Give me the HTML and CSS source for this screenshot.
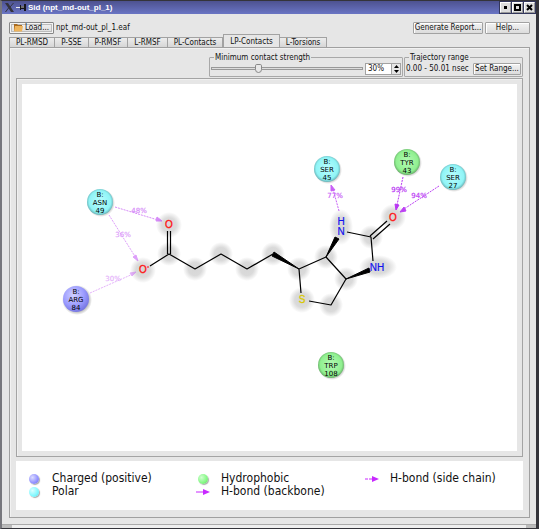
FILE: index.html
```html
<!DOCTYPE html>
<html lang="en">
<head>
<meta charset="utf-8">
<title>Sid (npt_md-out_pl_1)</title>
<link rel="stylesheet" href="styles.css">
</head>
<body>
<div class="window">
  <header class="titlebar">
    <svg class="app-icon" width="9" height="9" viewBox="0 0 9 9" aria-hidden="true"><path d="M0 0h3l6 9H6z" fill="#33333c"/><path d="M8.500 0L5 4M3.500 5L.5 9" stroke="#33333c" fill="none"/></svg>
    <svg class="pin-icon" width="10" height="7" viewBox="0 0 10 7" aria-hidden="true"><path d="M0 3.500h4" stroke="#eee"/><path d="M4 1h1v1h3V0h2v7H8V5H5v1H4z" fill="#16161c"/><path d="M5 3h3" stroke="#ccc"/></svg>
    <h1 class="title">Sid (npt_md-out_pl_1)</h1>
    <div class="window-buttons">
      <button class="window-button" aria-label="Minimize"><svg width="7" height="7"><path d="M2 2h3v3H2z"/></svg></button>
      <button class="window-button" aria-label="Maximize"><svg width="7" height="7"><path d="M1 1h5v5H1z" class="box"/></svg></button>
      <button class="window-button" aria-label="Close"><svg width="7" height="7"><path d="M1 1l5 5M6 1l-5 5" class="cross"/></svg></button>
    </div>
  </header>

  <main class="content">
    <div class="toolbar">
      <button class="button load"><svg width="9" height="9" viewBox="0 0 9 9" aria-hidden="true"><path d="M0 1h3l1 1h4v6H0z" fill="#a86b22"/><path d="M1 3h8L8 8.500H0z" fill="#eeb45c"/></svg>Load...</button>
      <span class="filename">npt_md-out_pl_1.eaf</span>
      <button class="button report">Generate Report...</button>
      <button class="button help">Help...</button>
    </div>

    <div class="tabs" role="tablist">
      <button class="tab" role="tab">PL-RMSD</button>
      <button class="tab" role="tab">P-SSE</button>
      <button class="tab" role="tab">P-RMSF</button>
      <button class="tab" role="tab">L-RMSF</button>
      <button class="tab" role="tab">PL-Contacts</button>
      <button class="tab selected" role="tab" aria-selected="true">LP-Contacts</button>
      <button class="tab" role="tab">L-Torsions</button>
    </div>

    <section class="page" role="tabpanel">
      <div class="controls">
        <fieldset class="group strength">
          <legend>Minimum contact strength</legend>
          <div class="group-row">
            <input class="slider" type="range" min="0" max="100" value="30" aria-label="Minimum contact strength">
            <div class="spinner">
              <input class="spin-value" type="text" value="30%" aria-label="Strength percentage">
              <div class="spin-buttons">
                <button aria-label="Increase"><svg width="5" height="3"><path d="M0 3L2.500 0 5 3z"/></svg></button>
                <button aria-label="Decrease"><svg width="5" height="3"><path d="M0 0h5L2.500 3z"/></svg></button>
              </div>
            </div>
          </div>
        </fieldset>
        <fieldset class="group range">
          <legend>Trajectory range</legend>
          <div class="group-row">
            <span>0.00 - 50.01 nsec</span>
            <button class="button">Set Range...</button>
          </div>
        </fieldset>
      </div>

      <div class="frame">
        <svg class="diagram" viewBox="22 84 495 367" role="img" aria-label="Ligand-protein contacts">
          <defs>
            <radialGradient id="halo"><stop offset="0" stop-color="#d6d6d6"/><stop offset=".55" stop-color="#d6d6d6" stop-opacity=".9"/><stop offset="1" stop-color="#d6d6d6" stop-opacity="0"/></radialGradient>
            <radialGradient id="shadow"><stop offset=".8" stop-color="#888" stop-opacity=".5"/><stop offset="1" stop-color="#888" stop-opacity="0"/></radialGradient>
            <radialGradient id="polar" cx=".5" cy=".48" r=".52"><stop offset="0" stop-color="#b8ffff"/><stop offset=".8" stop-color="#90f4f6"/><stop offset="1" stop-color="#68b4b8"/></radialGradient>
            <radialGradient id="hydrophobic" cx=".5" cy=".48" r=".52"><stop offset="0" stop-color="#b4fab4"/><stop offset=".8" stop-color="#90f090"/><stop offset="1" stop-color="#68ae68"/></radialGradient>
            <radialGradient id="positive" cx=".4" cy=".35" r=".68"><stop offset="0" stop-color="#d0d0ff"/><stop offset=".6" stop-color="#9c9cff"/><stop offset="1" stop-color="#7474e0"/></radialGradient>
          </defs>

          <g class="halos">
            <circle cx="169" cy="225" r="13"/><circle cx="143" cy="270" r="13"/><circle cx="169" cy="254" r="12"/><circle cx="195" cy="269" r="12"/>
            <circle cx="221" cy="254" r="12"/><circle cx="247" cy="269" r="12"/><circle cx="273" cy="254" r="12"/><circle cx="299" cy="269" r="12"/>
            <circle cx="326" cy="257" r="12"/><circle cx="346" cy="279" r="12"/><circle cx="331" cy="305" r="12"/><circle cx="302" cy="300" r="13"/>
            <ellipse cx="341" cy="227" rx="12" ry="18"/><circle cx="371" cy="237" r="12"/><circle cx="393" cy="217" r="13"/><ellipse cx="378" cy="267" rx="19" ry="12"/>
          </g>

          <g class="bonds">
            <path d="M167.500 231v23M170.500 231v23M150 266l19-12 26 15 26-15 26 15 26-15M299 269l27-12 20 22-15 26-22-4M299 269l2 24M347 232l24 5 2 24M370 236l17-15M373 239l17-15"/>
            <path class="wedge" d="M299 269l-25-17-2 4zM326 257l9-20 4 2zM346 279l23-11 1 4z"/>
          </g>

          <g class="atoms">
            <text class="oxygen" x="169" y="228">O</text>
            <text class="oxygen" x="143" y="273">O</text><path class="charge" d="M147 267h2"/>
            <text class="oxygen" x="393" y="221">O</text>
            <text class="nitrogen" x="341" y="225">H</text>
            <text class="nitrogen" x="341" y="235">N</text>
            <text class="nitrogen" x="377" y="271">NH</text>
            <text class="sulfur" x="302" y="303">S</text>
          </g>

          <g class="contact" opacity=".55"><path class="line" d="M115 207l43 13"/><path class="head" d="M162 221l-6 0 1-4z"/><text x="139" y="213">48%</text></g>
          <g class="contact" opacity=".45"><path class="line" d="M109 215l27 43"/><path class="head" d="M138 261l-5-4 3-2z"/><text x="123" y="237">36%</text></g>
          <g class="contact" opacity=".36"><path class="line" d="M90 293l43-19"/><path class="head" d="M136 272l-4 4-2-3z"/><text x="113" y="281">30%</text></g>
          <g class="contact" opacity=".75"><path class="line" d="M339 211l-6-22"/><path class="head" d="M331 185l4 5-4 1z"/><text x="335" y="198">77%</text></g>
          <g class="contact" opacity=".95"><path class="line" d="M403 177l-6 28"/><path class="head" d="M396 210l-1-6 4 1z"/><text x="399" y="192">99%</text></g>
          <g class="contact" opacity=".9"><path class="line" d="M439 186l-35 23"/><path class="head" d="M400 212l4-5 2 4z"/><text x="419" y="198">94%</text></g>

          <g class="residue" transform="translate(100 202)"><circle class="drop" r="14" cx="1" cy="1"/><circle class="polar" r="13"/><text y="-5">B:</text><text y="3">ASN</text><text y="11">49</text></g>
          <g class="residue" transform="translate(76 299)"><circle class="drop" r="15" cx="1" cy="1"/><circle class="positive" r="13"/><text y="-5">B:</text><text y="3">ARG</text><text y="11">84</text></g>
          <g class="residue" transform="translate(327 169)"><circle class="drop" r="14" cx="1" cy="1"/><circle class="polar" r="13"/><text y="-5">B:</text><text y="3">SER</text><text y="11">45</text></g>
          <g class="residue" transform="translate(407 162)"><circle class="drop" r="14" cx="1" cy="1"/><circle class="hydrophobic" r="13"/><text y="-5">B:</text><text y="3">TYR</text><text y="11">43</text></g>
          <g class="residue" transform="translate(453 177)"><circle class="drop" r="14" cx="1" cy="1"/><circle class="polar" r="13"/><text y="-5">B:</text><text y="3">SER</text><text y="11">27</text></g>
          <g class="residue" transform="translate(331 365)"><circle class="drop" r="14" cx="1" cy="1"/><circle class="hydrophobic" r="13"/><text y="-5">B:</text><text y="3">TRP</text><text y="11">108</text></g>
        </svg>
      </div>

      <ul class="key">
        <li><span class="symbol"><i class="ball ball-positive"></i></span>Charged (positive)</li>
        <li><span class="symbol"><i class="ball ball-hydrophobic"></i></span>Hydrophobic</li>
        <li><span class="symbol"><svg class="arrow" width="14" height="6"><path d="M0 3h8" stroke-dasharray="3 1"/><path d="M7 0l7 3-7 3z"/></svg></span>H-bond (side chain)</li>
        <li><span class="symbol"><i class="ball ball-polar"></i></span>Polar</li>
        <li><span class="symbol"><svg class="arrow" width="14" height="6"><path d="M0 3h8"/><path d="M7 0l7 3-7 3z"/></svg></span>H-bond (backbone)</li>
      </ul>
    </section>
  </main>
  <footer class="resize-bar"></footer>
</div>
</body>
</html>
```

FILE: styles.css
```css
* { box-sizing: border-box; }

body {
  margin: 0;
  min-height: 100vh;
  display: flex;
  background: #e6e6e6;
  color: #111;
  font: 8px/9px "DejaVu Sans Condensed", "DejaVu Sans", sans-serif;
}

button, input { font: inherit; color: inherit; margin: 0; }
button { padding: 0; white-space: nowrap; }

.window {
  flex: 1;
  display: flex;
  flex-direction: column;
  border: solid #34343a;
  border-width: 1px 3px 1px 2px;
  border-left-color: #77777d;
}

.titlebar {
  display: flex;
  align-items: center;
  height: 13px;
  padding-left: 3px;
  background: linear-gradient(#4d5290, #6a75c4);
}
.pin-icon { margin-left: 2px; }
.title {
  flex: 1;
  margin: 0 0 0 2px;
  color: #fff;
  font: bold 8px/15px "Liberation Sans", sans-serif;
}
.window-buttons {
  display: flex;
  align-self: stretch;
  align-items: center;
  gap: 1px;
  padding: 0 1px;
  background: #33375c;
}
.window-button {
  display: flex;
  align-items: center;
  justify-content: center;
  width: 11px;
  height: 11px;
  border: 1px solid #aaa;
  border-color: #fff #999 #999 #fff;
  background: #ddd;
}
.window-button .box { fill: none; stroke: #000; stroke-width: 2; }
.window-button .cross { fill: none; stroke: #000; stroke-width: 2; }

.content {
  flex: 1;
  display: flex;
  flex-direction: column;
  padding: 7px 6px 6px 7px;
}

.toolbar { display: flex; align-items: center; height: 13px; gap: 2px; }
.filename { flex: 1; }

.button {
  display: flex;
  align-items: center;
  justify-content: center;
  height: 12px;
  border: 1px solid #a2a2a2;
  border-radius: 1px;
  background: linear-gradient(#f2f2f2, #dcdcdc);
  box-shadow: inset 1px 1px #fff;
}
.load {
  width: 45px;
  gap: 2px;
  border-color: #888;
  box-shadow: inset 0 0 0 1px #f4f4f4, inset 0 0 0 2px #bbb;
}
.report { width: 70px; }
.help { width: 45px; }

.tabs { display: flex; align-items: flex-end; height: 14px; margin-bottom: -1px; }
.tab {
  height: 11px;
  padding: 0 6px;
  border: 1px solid #a2a2a2;
  border-left-width: 0;
  background: linear-gradient(#ededed, #d6d6d6);
}
.tab:first-child { border-left-width: 1px; }
.tab.selected {
  height: 14px;
  padding-bottom: 1px;
  border-bottom: 0;
  border-left-width: 1px;
  background: #e6e6e6;
}

.page {
  flex: 1;
  display: flex;
  flex-direction: column;
  padding: 5px 6px 6px;
  border: 1px solid #a0a0a0;
  box-shadow: inset 1px 1px #f2f2f2;
}

.controls { display: flex; justify-content: flex-end; gap: 1px; height: 24px; margin-bottom: 1px; }
.group {
  min-width: 0;
  height: 24px;
  margin: 0;
  padding: 0 1px;
  border: 1px solid #a8a8a8;
  border-radius: 1px;
}
.group legend { margin-left: 3px; padding: 0 1px; height: 9px; }
.group-row { display: flex; align-items: center; gap: 2px; height: 13px; white-space: nowrap; }
.strength { width: 194px; }
.range { width: 119px; }
.range .group-row { justify-content: space-between; }
.range .button { width: 48px; }

.slider {
  flex: 1;
  min-width: 0;
  height: 10px;
  appearance: none;
  background: none;
}
.slider::-webkit-slider-runnable-track {
  height: 3px;
  border: 1px solid #999;
  background: #ddd;
}
.slider::-webkit-slider-thumb {
  appearance: none;
  width: 7px;
  height: 9px;
  margin-top: -4px;
  border: 1px solid #888;
  border-radius: 2px 2px 4px 4px;
  background: #e8e8e8;
}
.spinner { display: flex; width: 36px; height: 12px; border: 1px solid #a2a2a2; }
.spin-value { width: 25px; padding: 0 2px; border: 0; background: #fff; }
.spin-buttons { flex: 1; display: grid; }
.spin-buttons button {
  display: flex;
  align-items: center;
  justify-content: center;
  border: 0;
  border-left: 1px solid #a2a2a2;
  background: #e6e6e6;
}

.frame {
  padding: 5px;
  border: 1px solid #a4a4a4;
  box-shadow: inset 1px 1px #f0f0f0;
}
.diagram { display: block; width: 100%; background: #fff; text-anchor: middle; }

.halos { fill: url(#halo); }
.bonds { fill: none; stroke: #000; stroke-width: 1.2; stroke-linejoin: round; }
.bonds .wedge { fill: #000; stroke-width: 1; }
.atoms { font: 10px "Liberation Sans", sans-serif; }
.oxygen { fill: #f11; stroke: #f11; stroke-width: .3; }
.charge { stroke: #f11; }
.nitrogen { fill: #11e; stroke: #11e; stroke-width: .2; }
.sulfur { fill: #d8c800; stroke: #d8c800; stroke-width: .3; }
.contact, .residue { font-family: "DejaVu Sans", sans-serif; font-size: 7px; }
.contact { fill: #b62cf4; }
.contact text { stroke: #b62cf4; stroke-width: .2; }
.contact .line { fill: none; stroke: #b62cf4; stroke-dasharray: 2 1; }
.contact .head { stroke: #b62cf4; }
.drop { fill: url(#shadow); }
.polar { fill: url(#polar); }
.hydrophobic { fill: url(#hydrophobic); }
.positive { fill: url(#positive); }

.key {
  display: grid;
  grid-template-columns: repeat(3, 1fr);
  grid-auto-rows: 13px;
  margin: 4px 0 0;
  padding: 11px 0 12px;
  list-style: none;
  background: #fff;
  font-size: 12px;
  line-height: 13px;
}
.key li { display: flex; gap: 11px; padding-left: 11px; white-space: nowrap; }
.symbol { display: flex; align-items: center; justify-content: center; width: 14px; height: 13px; }
.ball { width: 10px; height: 10px; border-radius: 50%; box-shadow: 1px 1px 1px #aaa; }
.ball-positive { background: radial-gradient(circle at 35% 35%, #dcdcff, #9090ff 60%, #7474dc); }
.ball-hydrophobic { background: radial-gradient(circle at 35% 35%, #d0ffd0, #84f884 60%, #60cc60); }
.ball-polar { background: radial-gradient(circle at 35% 35%, #dcffff, #80f8ff 60%, #5cd0d8); }
.arrow { fill: #c828ff; stroke: none; }
.arrow path:first-child { stroke: #c828ff; stroke-width: 1; }

.resize-bar {
  height: 4px;
  border: solid #aaa;
  border-width: 1px 0 0;
  background: linear-gradient(90deg, #bbb 10px, #eee 10px calc(100% - 10px), #bbb calc(100% - 10px));
}
```
